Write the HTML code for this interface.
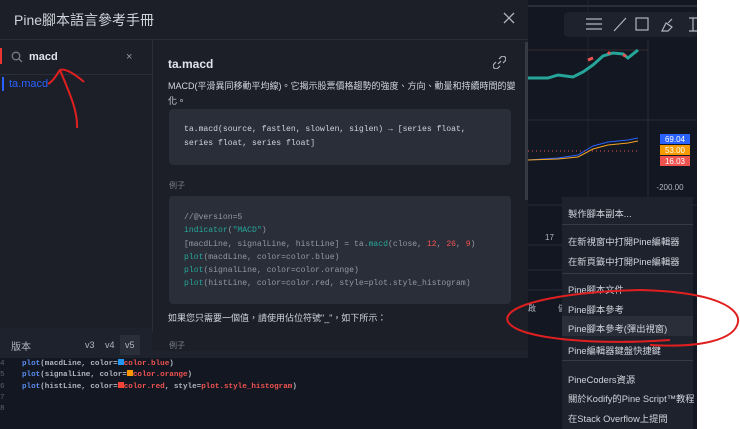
<!DOCTYPE html>
<html><head><meta charset="utf-8"><style>
*{margin:0;padding:0;box-sizing:border-box}
body{width:740px;height:429px;overflow:hidden;background:#fff;font-family:"Liberation Sans","Noto Sans CJK TC",sans-serif;position:relative}
.abs{position:absolute}
.mono{font-family:"Liberation Mono","Noto Sans CJK TC",monospace;white-space:nowrap}
.chart{left:0;top:0;width:697px;height:429px;background:#131722}
.dlg{left:0;top:0;width:528px;height:352px;background:#1c1f28}
.menu{left:562px;top:197px;width:131px;height:232px;background:#1e222d;color:#d1d4dc;font-size:9.3px}
.menu div.i{position:absolute;left:6px;white-space:nowrap}
.sep{position:absolute;left:0;width:131px;height:1px;background:#363a45}
</style></head><body>
<div class="abs chart"></div>
<svg class="abs" style="left:528px;top:0" width="169" height="352">
<line x1="0" y1="6" x2="169" y2="6" stroke="#2a2e39" stroke-width="2"/>
<line x1="0" y1="50" x2="120" y2="50" stroke="#3a2a30"/>
<line x1="0" y1="120" x2="169" y2="120" stroke="#2a2e39"/>
<line x1="120" y1="40" x2="120" y2="352" stroke="#2a2e39"/>
<line x1="60" y1="0" x2="60" y2="352" stroke="#22262f"/>
<line x1="0" y1="205" x2="169" y2="205" stroke="#2a2e39"/>
<line x1="0" y1="245" x2="40" y2="245" stroke="#2a2e39"/>
<line x1="0" y1="270" x2="40" y2="270" stroke="#2a2e39"/>
<line x1="0" y1="290" x2="40" y2="290" stroke="#2a2e39"/>
<path d="M0,78 L20,78 L30,75 L45,77 L55,72 L65,65 L75,56 L85,53 L95,54 L100,58 L110,50" stroke="#26a69a" stroke-width="3" fill="none"/>
<path d="M60,60 L65,58 M80,52 L82,54 M95,55 L98,56" stroke="#ef5350" stroke-width="3"/>
<path d="M0,160 L30,158 L50,155 L65,146 L80,142 L100,140 L110,138" stroke="#2962ff" fill="none"/>
<path d="M0,160 L30,159 L50,157 L65,149 L80,145 L100,143 L110,141" stroke="#f5a623" fill="none"/>
<line x1="0" y1="151" x2="110" y2="151" stroke="#ef5350" stroke-dasharray="1 3"/>
<rect x="132" y="134" width="30" height="10" fill="#2962ff"/><text x="147" y="142" fill="#fff" font-size="8" text-anchor="middle" font-family="Liberation Sans">69.04</text>
<rect x="132" y="145" width="30" height="10" fill="#f59a00"/><text x="147" y="153" fill="#fff" font-size="8" text-anchor="middle" font-family="Liberation Sans">53.00</text>
<rect x="132" y="156" width="30" height="10" fill="#ef5350"/><text x="147" y="164" fill="#fff" font-size="8" text-anchor="middle" font-family="Liberation Sans">16.03</text>
<text x="142" y="190" fill="#b2b5be" font-size="8" text-anchor="middle" font-family="Liberation Sans">-200.00</text>
<text x="17" y="240" fill="#b2b5be" font-size="8" font-family="Liberation Sans">17</text>
<text x="30" y="311" fill="#b2b5be" font-size="8" font-family="Noto Sans CJK TC">儲</text>
<text x="0" y="311" fill="#b2b5be" font-size="8" font-family="Noto Sans CJK TC">啟</text>
</svg>
<div class="abs" style="left:564px;top:12px;width:133px;height:25px;background:#1e222d;border-radius:4px"></div>
<svg class="abs" style="left:564px;top:12px" width="133" height="25" fill="none" stroke="#b2b5be" stroke-width="1.2">
<path d="M22,7h16M22,12h16M22,17h16"/><path d="M50,19L62,6"/><rect x="72" y="6" width="12" height="12"/><path d="M98,19l4-8 6 4-4 4z M104,11l4-4"/><path d="M125,6h8M129,6v13M125,19h8"/>
</svg>
<div class="abs dlg"></div>
<div class="abs" style="left:14px;top:10px;color:#d1d4dc;font-size:14px">Pine腳本語言參考手冊</div>
<svg class="abs" style="left:503px;top:12px" width="12" height="12" stroke="#b2b5be" stroke-width="1.3"><path d="M1,1L11,11M11,1L1,11"/></svg>
<div class="abs" style="left:0;top:39px;width:528px;height:1px;background:#2a2e39"></div>
<div class="abs" style="left:152px;top:40px;width:1px;height:292px;background:#2a2e39"></div>
<div class="abs" style="left:0;top:74px;width:152px;height:1px;background:#2a2e39"></div>
<div class="abs" style="left:0;top:48px;width:2px;height:16px;background:#e33"></div>
<svg class="abs" style="left:11px;top:51px" width="12" height="12" fill="none" stroke="#787b86" stroke-width="1.3"><circle cx="5" cy="5" r="3.8"/><path d="M8,8l3,3"/></svg>
<div class="abs" style="left:29px;top:51px;color:#e0e3eb;font-size:11px;font-weight:bold">macd</div>
<div class="abs" style="left:126px;top:51px;color:#9598a1;font-size:11px">×</div>
<div class="abs" style="left:2px;top:77px;width:2px;height:14px;background:#2962ff"></div>
<div class="abs" style="left:9px;top:78px;color:#2962ff;font-size:11px">ta.macd</div>
<div class="abs" style="left:168px;top:57px;color:#e0e3eb;font-size:12px;font-weight:bold">ta.macd</div>
<svg class="abs" style="left:493px;top:56px" width="13" height="13" fill="none" stroke="#b2b5be" stroke-width="1.2"><path d="M5,8l3-3M6,3l2-2a2.5,2.5 0 0 1 4,4l-2,2M7,10l-2,2a2.5,2.5 0 0 1-4-4l2-2"/></svg>
<div class="abs" style="left:168px;top:79px;width:345px;color:#d1d4dc;font-size:9px;line-height:15px;white-space:nowrap">MACD(平滑異同移動平均線)。它揭示股票價格趨勢的強度、方向、動量和持續時間的變<br>化。</div>
<div class="abs mono" style="left:169px;top:109px;width:342px;height:56px;background:#2a2e39;border-radius:4px;color:#d1d4dc;font-size:8.1px;line-height:13.5px;padding:14px 15px">ta.macd(source, fastlen, slowlen, siglen) → [series float,<br>series float, series float]</div>
<div class="abs" style="left:169px;top:180px;color:#787b86;font-size:8px">例子</div>
<div class="abs mono" style="left:169px;top:196px;width:342px;height:108px;background:#2a2e39;border-radius:4px;color:#9598a1;font-size:8.1px;line-height:13.3px;padding:15px 15px">
//@version=5<br><span style="color:#26a69a">indicator</span>(<span style="color:#26a69a">"MACD"</span>)<br>[macdLine, signalLine, histLine] = ta.<span style="color:#26a69a">macd</span>(close, <span style="color:#ef5350">12</span>, <span style="color:#ef5350">26</span>, <span style="color:#ef5350">9</span>)<br><span style="color:#26a69a">plot</span>(macdLine, color=color.blue)<br><span style="color:#26a69a">plot</span>(signalLine, color=color.orange)<br><span style="color:#26a69a">plot</span>(histLine, color=color.red, style=plot.style_histogram)</div>
<div class="abs" style="left:168px;top:311px;color:#d1d4dc;font-size:9px;white-space:nowrap">如果您只需要一個值，請使用佔位符號"_"，如下所示：</div>
<div class="abs" style="left:169px;top:340px;color:#787b86;font-size:8px">例子</div>
<div class="abs" style="left:525px;top:42px;width:3px;height:158px;background:#363a45"></div>
<div class="abs" style="left:0;top:328px;width:152px;height:30px;background:#1e222d"></div>
<div class="abs" style="left:11px;top:338px;color:#b2b5be;font-size:10px">版本</div>
<div class="abs" style="left:85px;top:340px;color:#b2b5be;font-size:9px">v3</div>
<div class="abs" style="left:105px;top:340px;color:#b2b5be;font-size:9px">v4</div>
<div class="abs" style="left:120px;top:335px;width:20px;height:20px;background:#2a2e39"></div>
<div class="abs" style="left:125px;top:340px;color:#b2b5be;font-size:9px">v5</div>
<div class="abs" style="left:152px;top:351px;width:376px;height:10px;background:#1e222d"></div>
<div class="abs" style="left:0;top:358px;width:560px;height:71px;background:#131722"></div>
<div class="abs mono" style="left:0;top:359px;font-size:7.6px;line-height:11.3px;color:#5d606b;white-space:pre">4
5
6
7
8</div>
<div class="abs mono" style="left:22px;top:359px;font-size:7.6px;line-height:11.3px;color:#b2b5be;white-space:pre;font-weight:bold"><span style="color:#5b8def">plot</span>(macdLine, color=<span style="display:inline-block;width:6px;height:6px;background:#2196f3"></span><span style="color:#ef5350">color.blue</span>)
<span style="color:#5b8def">plot</span>(signalLine, color=<span style="display:inline-block;width:6px;height:6px;background:#ff9800"></span><span style="color:#ef5350">color.orange</span>)
<span style="color:#5b8def">plot</span>(histLine, color=<span style="display:inline-block;width:6px;height:6px;background:#f44336"></span><span style="color:#ef5350">color.red</span>, style=<span style="color:#ef5350">plot.style_histogram</span>)</div>
<div class="abs menu">
<div class="i" style="top:9px">製作腳本副本...</div>
<div class="sep" style="top:27px"></div>
<div class="i" style="top:37px">在新視窗中打開Pine編輯器</div>
<div class="i" style="top:57px">在新頁籤中打開Pine編輯器</div>
<div class="sep" style="top:76px"></div>
<div class="i" style="top:85px">Pine腳本文件</div>
<div class="i" style="top:105px">Pine腳本參考</div>
<div style="position:absolute;left:0;top:119px;width:131px;height:20px;background:#2a2e39"></div>
<div class="i" style="top:124px">Pine腳本參考(彈出視窗)</div>
<div class="i" style="top:146px">Pine編輯器鍵盤快捷鍵</div>
<div class="sep" style="top:163px"></div>
<div class="i" style="top:175px">PineCoders資源</div>
<div class="i" style="top:194px">關於Kodify的Pine Script™教程</div>
<div class="i" style="top:214px">在Stack Overflow上提問</div>
</div>
<svg class="abs" style="left:0;top:0" width="740" height="429" fill="none" stroke="#e02020" stroke-width="2">
<path d="M48,84 C55,80 58,72 60,70 C65,68 75,74 84,82 M60,70 C68,90 78,110 77,128"/>
<path d="M670,340 C600,345 520,340 508,322 C500,305 560,292 640,290 C720,292 740,310 738,322 C735,340 700,348 650,345"/>
</svg>
</body></html>
